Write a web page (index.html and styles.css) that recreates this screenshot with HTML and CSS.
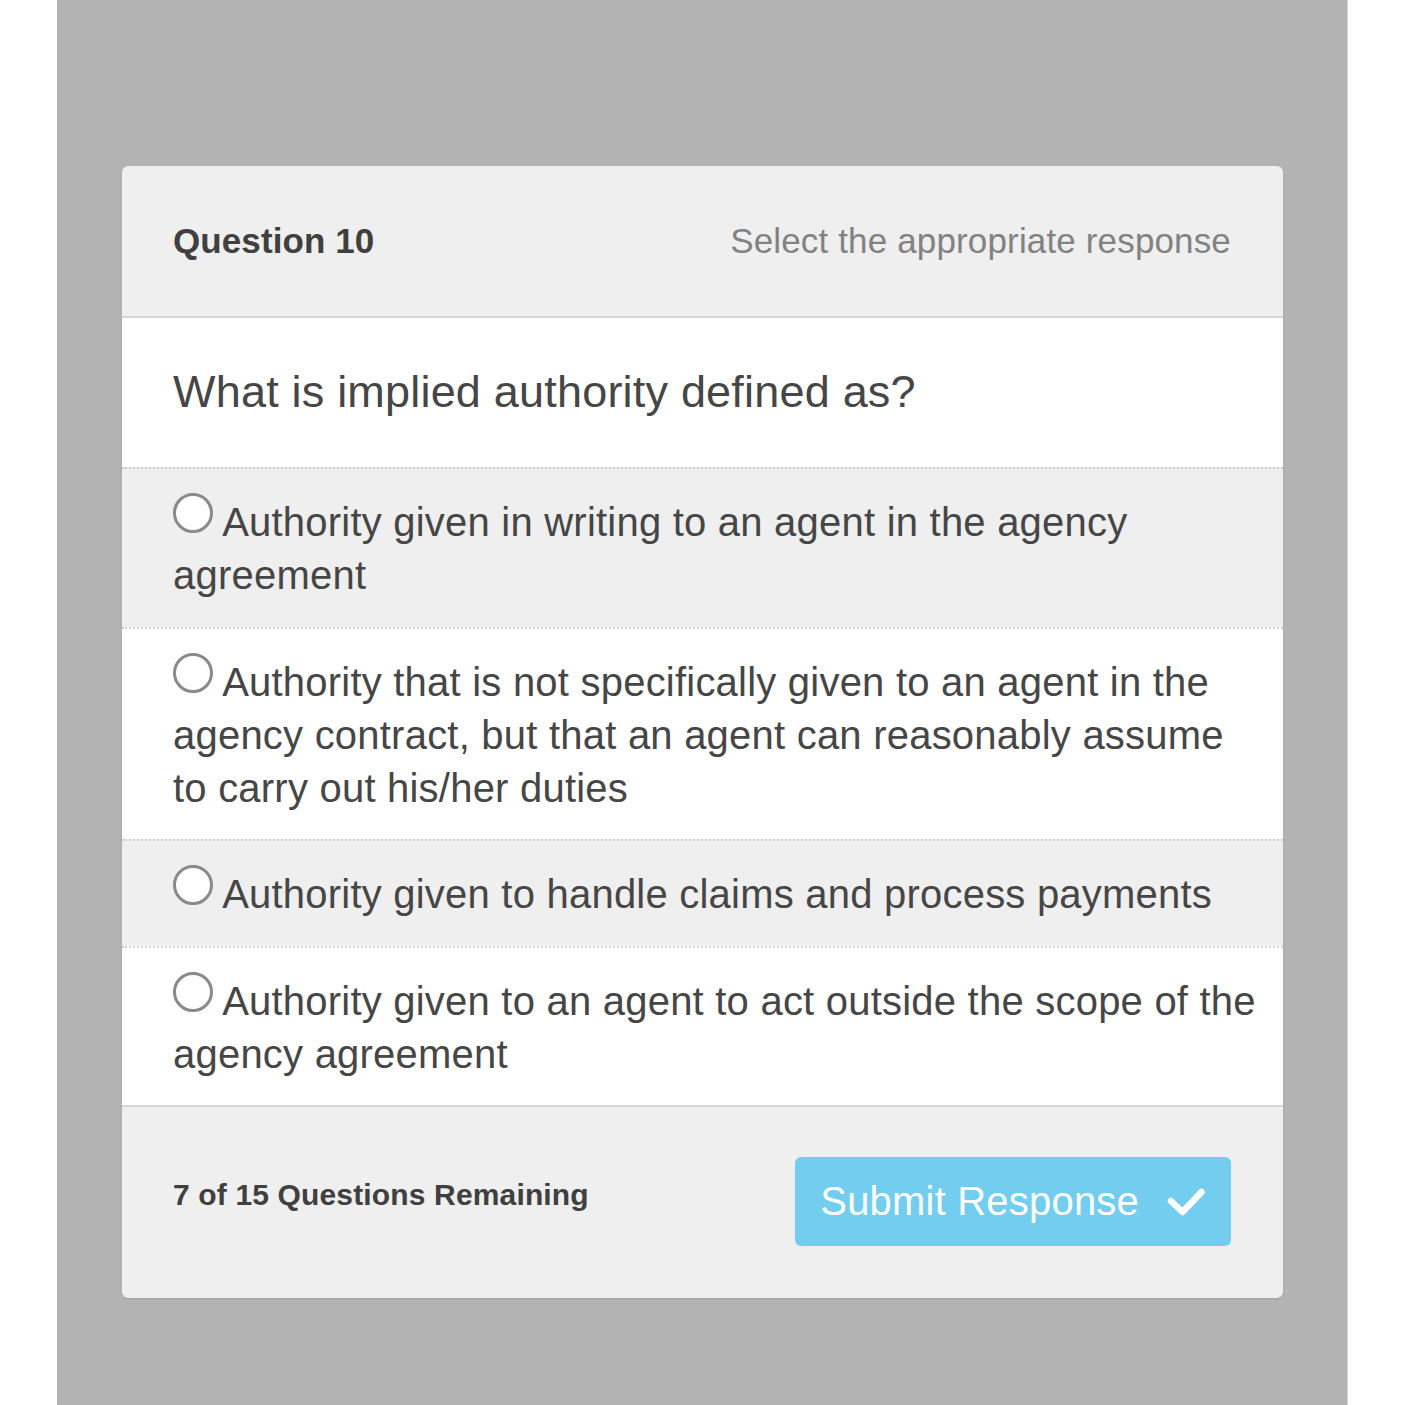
FILE: index.html
```html
<!DOCTYPE html>
<html lang="en">
<head>
    <meta charset="UTF-8">
    <meta name="viewport" content="width=device-width, initial-scale=1.0">
    <title>Question 10</title>
    <link rel="stylesheet" href="styles.css">
</head>
<body>
    <div class="panel">
        <div class="card">
            <!-- intestazione -->
            <div class="card-header">
                <span class="q-number">Question 10</span>
                <span class="q-hint">Select the appropriate response</span>
            </div>

            <div class="q-text">What is implied authority defined as?</div>

            <!-- risposte -->
            <label class="option alt">
                <span class="radio"></span> Authority given in writing to an agent in the agency agreement
            </label>
            <label class="option">
                <span class="radio"></span> Authority that is not specifically given to an agent in the agency contract, but that an agent can reasonably assume to carry out his/her duties
            </label>
            <label class="option alt">
                <span class="radio"></span> Authority given to handle claims and process payments
            </label>
            <label class="option">
                <span class="radio"></span> Authority given to an agent to act outside the scope of the agency agreement
            </label>

            <div class="card-footer">
                <span class="remaining">7 of 15 Questions Remaining</span>
                <button class="submit-button">
                    Submit Response
                    <svg class="check" width="38" height="30" viewBox="0 0 38 30">
                        <path d="M4 14 L15.5 25 L34.5 5" fill="none" stroke="#fff" stroke-width="6.5" stroke-linecap="round" stroke-linejoin="round"/>
                    </svg>
                </button>
            </div>
        </div>
    </div>
</body>
</html>
```

FILE: styles.css
```css
body {
    margin: 0;
    background: #fff;
    font-family: "Liberation Sans", Arial, sans-serif;
    color: #464646;
}
.panel {
    margin-left: 57px;
    width: 1291px;
    min-height: 1405px;
    box-sizing: border-box;
    padding: 166px 64px 0 65px;
    background: #b3b3b3;
    border-right: 1px solid #d2d2d2;
}
.card {
    background: #efefef;
    border-radius: 6px;
    overflow: hidden;
    box-shadow: 0 1px 2px rgba(0, 0, 0, 0.12);
}
.card-header {
    height: 150px;
    display: flex;
    justify-content: space-between;
    align-items: center;
    padding: 0 52px 0 51px;
    border-bottom: 2px solid #d6d6d6;
}
.q-number {
    font-size: 35px;
    font-weight: bold;
    color: #404040;
    letter-spacing: 0.1px;
}
.q-hint {
    font-size: 35px;
    color: #828282;
    letter-spacing: 0.15px;
}
.q-text {
    background: #fff;
    font-size: 45px;
    line-height: 54px;
    letter-spacing: 0.2px;
    padding: 47px 52px 48px 51px;
}
.option {
    display: block;
    font-size: 40px;
    line-height: 53px;
    letter-spacing: 0.22px;
    padding: 24px 23px 24.5px 51px;
    background: #fff;
    border-top: 2px dotted #cfcfcf;
}
.option.alt {
    background: #efefef;
}
.radio {
    display: inline-block;
    width: 40px;
    height: 40px;
    box-sizing: border-box;
    border: 3px solid #8a8a8a;
    border-radius: 50%;
    background: #fff;
    margin-bottom: 3px;
}
.card-footer {
    display: flex;
    justify-content: space-between;
    align-items: center;
    padding: 50px 52px 52px 51px;
    border-top: 2px solid #d6d6d6;
}
.remaining {
    font-size: 30px;
    font-weight: bold;
    color: #404040;
    letter-spacing: 0.15px;
    margin-bottom: 14px;
}
.submit-button {
    display: flex;
    align-items: center;
    height: 89px;
    padding: 0 26px 0 25px;
    background: #72cdef;
    border: none;
    border-radius: 6px;
    color: #fff;
    font-family: "Liberation Sans", Arial, sans-serif;
    font-size: 40px;
    letter-spacing: 0.2px;
    cursor: pointer;
}
.check {
    margin-left: 28px;
}
```
